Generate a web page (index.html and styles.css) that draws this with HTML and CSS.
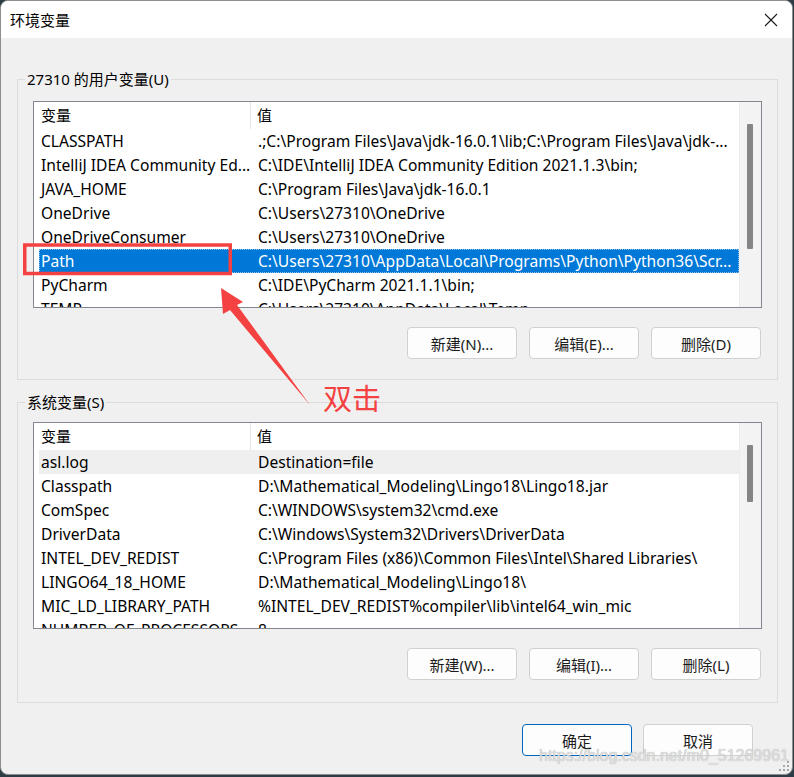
FILE: index.html
```html
<!DOCTYPE html>
<html lang="zh-CN">
<head>
    <meta charset="UTF-8">
    <meta name="viewport" content="width=device-width, initial-scale=1.0">
    <title>环境变量</title>
    <link rel="stylesheet" href="styles.css">
</head>
<body>
    <div class="window">
        <div class="titlebar">
            <span class="title">环境变量</span>
            <svg class="close" width="14" height="14" viewBox="0 0 14 14">
                <path d="M1 1L13 13M13 1L1 13" stroke="#1a1a1a" stroke-width="1.1" fill="none"/>
            </svg>
        </div>

        <div class="content">
            <!-- 用户变量 -->
            <fieldset class="group user">
                <legend>27310 的用户变量(U)</legend>
                <div class="listview">
                    <div class="rows">
                        <div class="row head"><span class="name">变量</span><span class="value">值</span></div>
                        <div class="row"><span class="name">CLASSPATH</span><span class="value">.;C:\Program Files\Java\jdk-16.0.1\lib;C:\Program Files\Java\jdk-...</span></div>
                        <div class="row"><span class="name">IntelliJ IDEA Community Ed...</span><span class="value">C:\IDE\IntelliJ IDEA Community Edition 2021.1.3\bin;</span></div>
                        <div class="row"><span class="name">JAVA_HOME</span><span class="value">C:\Program Files\Java\jdk-16.0.1</span></div>
                        <div class="row"><span class="name">OneDrive</span><span class="value">C:\Users\27310\OneDrive</span></div>
                        <div class="row"><span class="name">OneDriveConsumer</span><span class="value">C:\Users\27310\OneDrive</span></div>
                        <div class="row selected"><span class="name">Path</span><span class="value">C:\Users\27310\AppData\Local\Programs\Python\Python36\Scr...</span></div>
                        <div class="row"><span class="name">PyCharm</span><span class="value">C:\IDE\PyCharm 2021.1.1\bin;</span></div>
                        <div class="row"><span class="name">TEMP</span><span class="value">C:\Users\27310\AppData\Local\Temp</span></div>
                    </div>
                    <div class="scrollbar"><div class="thumb"></div></div>
                </div>
                <div class="buttons">
                    <button class="btn">新建(N)...</button>
                    <button class="btn">编辑(E)...</button>
                    <button class="btn">删除(D)</button>
                </div>
            </fieldset>

            <!-- 系统变量 -->
            <fieldset class="group system">
                <legend>系统变量(S)</legend>
                <div class="listview">
                    <div class="rows">
                        <div class="row head"><span class="name">变量</span><span class="value">值</span></div>
                        <div class="row hover"><span class="name">asl.log</span><span class="value">Destination=file</span></div>
                        <div class="row"><span class="name">Classpath</span><span class="value">D:\Mathematical_Modeling\Lingo18\Lingo18.jar</span></div>
                        <div class="row"><span class="name">ComSpec</span><span class="value">C:\WINDOWS\system32\cmd.exe</span></div>
                        <div class="row"><span class="name">DriverData</span><span class="value">C:\Windows\System32\Drivers\DriverData</span></div>
                        <div class="row"><span class="name">INTEL_DEV_REDIST</span><span class="value">C:\Program Files (x86)\Common Files\Intel\Shared Libraries\</span></div>
                        <div class="row"><span class="name">LINGO64_18_HOME</span><span class="value">D:\Mathematical_Modeling\Lingo18\</span></div>
                        <div class="row"><span class="name">MIC_LD_LIBRARY_PATH</span><span class="value">%INTEL_DEV_REDIST%compiler\lib\intel64_win_mic</span></div>
                        <div class="row"><span class="name">NUMBER_OF_PROCESSORS</span><span class="value">8</span></div>
                    </div>
                    <div class="scrollbar"><div class="thumb"></div></div>
                </div>
                <div class="buttons">
                    <button class="btn">新建(W)...</button>
                    <button class="btn">编辑(I)...</button>
                    <button class="btn">删除(L)</button>
                </div>
            </fieldset>

            <div class="footer">
                <button class="btn default">确定</button>
                <button class="btn">取消</button>
            </div>
        </div>

        <!-- 标注：红框 + 箭头 -->
        <svg class="marks" width="793" height="775" viewBox="0 0 793 775">
            <rect x="24.75" y="245" width="205.5" height="28.5" fill="none" stroke="#f44141" stroke-width="3.5"/>
            <polygon points="221,288 243,302 237,305 310,405 230,310 223,314" fill="#f44141"/>
        </svg>
        <span class="note">双击</span>

        <span class="watermark">https://blog.csdn.net/m0_51269961</span>
        <svg class="grip" width="12" height="12" viewBox="0 0 12 12">
            <rect x="9" y="1" width="2" height="2" fill="#a6a6a6"/>
            <rect x="5" y="5" width="2" height="2" fill="#a6a6a6"/>
            <rect x="9" y="5" width="2" height="2" fill="#a6a6a6"/>
            <rect x="1" y="9" width="2" height="2" fill="#a6a6a6"/>
            <rect x="5" y="9" width="2" height="2" fill="#a6a6a6"/>
            <rect x="9" y="9" width="2" height="2" fill="#a6a6a6"/>
        </svg>
    </div>
</body>
</html>
```

FILE: styles.css
```css
*{
    margin: 0;
    padding: 0;
    box-sizing: border-box;
}
body{
    background: #2e3d45;
    font-family: "Noto Sans", "Noto Sans CJK SC", sans-serif;
    font-size: 15px;
    color: #000;
}
.window{
    position: relative;
    width: 793px;
    height: 775px;
    border: 1px solid #8e8e8e;
    border-radius: 8px;
    background: #f0f0f0;
    overflow: hidden;
}

/* 标题栏 */
.titlebar{
    height: 37px;
    background: #fff;
    display: flex;
    align-items: center;
    justify-content: space-between;
    padding: 0 14px 0 9px;
}
.titlebar .title{
    font-size: 15px;
    line-height: 20px;
}
.titlebar .close{
    display: block;
}

/* 分组框 */
.group{
    border: 1px solid #dcdcdc;
    margin: 0 14px 0 16px;
    padding: 12px 15px 20px 15px;
}
.group.user{
    margin-top: 31px;
}
.group.system{
    margin-top: 12px;
    padding-top: 10px;
    padding-bottom: 22px;
}
.group legend{
    line-height: 20px;
    padding: 0 2px;
    margin-left: -8px;
    font-size: 15px;
}

/* 列表 */
.listview{
    display: flex;
    height: 207px;
    border: 1px solid #828790;
    background: #fff;
    overflow: hidden;
}
.rows{
    flex: 1;
    min-width: 0;
    padding-left: 5px;
    font-size: 15.6px;
}
.row{
    display: flex;
    height: 24px;
    line-height: 24px;
    white-space: nowrap;
}
.row .name{
    width: 212px;
    flex: none;
    padding: 0 4px 0 2px;
    overflow: hidden;
}
.row .value{
    flex: 1;
    min-width: 0;
    padding: 0 6px 0 7px;
    overflow: hidden;
}
.row.head{
    height: 27px;
    line-height: 27px;
    font-size: 15px;
}
.row.head .name{
    border-right: 1px solid #e5e5e5;
}
.row.head .value{
    padding-left: 6px;
}
.row.selected{
    background: #0078d7;
    color: #fff;
    outline: 1px dotted #8fc3ee;
    outline-offset: -1px;
}
.row.hover{
    background: #efefef;
}
.scrollbar{
    width: 22px;
    flex: none;
    background: #f3f3f3;
    border-left: 1px solid #ececec;
}
.scrollbar .thumb{
    width: 6px;
    margin-left: 7px;
    background: #858585;
    border-radius: 1px;
}
.user .thumb{
    margin-top: 22px;
    height: 125px;
}
.system .thumb{
    margin-top: 22px;
    height: 57px;
}

/* 按钮 */
.buttons{
    display: flex;
    justify-content: flex-end;
    gap: 12px;
    margin-top: 19px;
    padding-right: 1px;
}
.btn{
    width: 110px;
    height: 32px;
    border: 1px solid #d0d0d0;
    border-radius: 4px;
    background: #fdfdfd;
    font-family: "Noto Sans", "Noto Sans CJK SC", sans-serif;
    font-size: 15px;
    color: #1b1b1b;
}
.btn.default{
    border-color: #0067c0;
}
.footer{
    display: flex;
    justify-content: flex-end;
    gap: 11px;
    margin-top: 21px;
    padding-right: 39px;
}

/* 标注 */
.marks{
    position: absolute;
    left: -1px;
    top: -1px;
    pointer-events: none;
}
.note{
    position: absolute;
    left: 322px;
    top: 381px;
    font-family: "Noto Sans CJK SC", sans-serif;
    font-size: 29px;
    line-height: 30px;
    color: #f44141;
}
.watermark{
    position: absolute;
    left: 538px;
    top: 746px;
    font-family: "Liberation Sans", Arial, sans-serif;
    font-size: 16px;
    color: #dedede;
    text-shadow: 0 0 1px #a8a8a8;
    pointer-events: none;
}
.grip{
    position: absolute;
    right: 2px;
    bottom: 2px;
}
```
